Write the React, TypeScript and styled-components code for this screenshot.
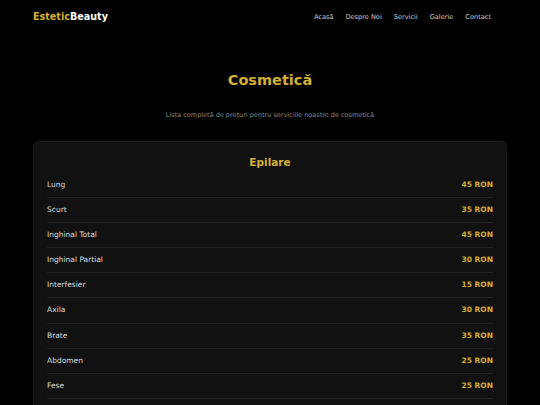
import styled, { createGlobalStyle } from 'styled-components';

const GlobalStyle = createGlobalStyle`
  html, body {
    margin: 0;
    padding: 0;
    background: #000;
  }
  body {
    font-family: 'DejaVu Sans', Verdana, sans-serif;
    color: #ddd;
  }
  * { box-sizing: border-box; }
`;

const gold = '#d4af37';

const Header = styled.header`
  display: flex;
  justify-content: space-between;
  align-items: center;
  height: 33px;
  padding: 0 49px 0 33px;
`;

const Logo = styled.div`
  font-size: 9.6px;
  font-weight: bold;
  color: #fff;

  span {
    color: ${gold};
  }
`;

const Nav = styled.nav`
  display: flex;
  gap: 12px;
`;

const NavLink = styled.a`
  font-size: 6.6px;
  color: #ccc;
  text-decoration: none;
`;

const Hero = styled.section`
  text-align: center;
  padding-top: 36px;
`;

const Title = styled.h1`
  margin: 0;
  font-size: 14.5px;
  line-height: 22px;
  color: ${gold};
`;

const Subtitle = styled.p`
  margin: 19px 0 0;
  font-size: 6.5px;
  line-height: 10px;
  color: #888;
`;

const Card = styled.div`
  width: 474px;
  margin: 21px auto 0;
  background: #111;
  border: 1px solid #1c1c1c;
  border-radius: 6px;
  padding: 12px 13px 0;
`;

const CardTitle = styled.h2`
  margin: 0 0 3px;
  text-align: center;
  font-size: 10.5px;
  line-height: 16px;
  color: ${gold};
`;

const Row = styled.div`
  display: flex;
  justify-content: space-between;
  align-items: center;
  padding: 7px 0;
  line-height: 10.1px;
  border-bottom: 1px solid #222;
  font-size: 7.5px;
`;

const Name = styled.span`
  color: #ddd;
`;

const Price = styled.span`
  color: ${gold};
  font-weight: bold;
`;

const items: [string, number][] = [
  ['Lung', 45],
  ['Scurt', 35],
  ['Inghinal Total', 45],
  ['Inghinal Partial', 30],
  ['Interfesier', 15],
  ['Axila', 30],
  ['Brate', 35],
  ['Abdomen', 25],
  ['Fese', 25],
  ['Picioare', 40],
];

export default function App() {
  return (
    <>
      <GlobalStyle />
      <Header>
        <Logo>
          <span>Estetic</span>Beauty
        </Logo>
        <Nav>
          {['Acasă', 'Despre Noi', 'Servicii', 'Galerie', 'Contact'].map((l) => (
            <NavLink key={l} href="#">
              {l}
            </NavLink>
          ))}
        </Nav>
      </Header>
      <Hero>
        <Title>Cosmetică</Title>
        <Subtitle>Lista completă de prețuri pentru serviciile noastre de cosmetică</Subtitle>
      </Hero>
      <Card>
        <CardTitle>Epilare</CardTitle>
        {items.map(([name, price]) => (
          <Row key={name}>
            <Name>{name}</Name>
            <Price>{price} RON</Price>
          </Row>
        ))}
      </Card>
    </>
  );
}
